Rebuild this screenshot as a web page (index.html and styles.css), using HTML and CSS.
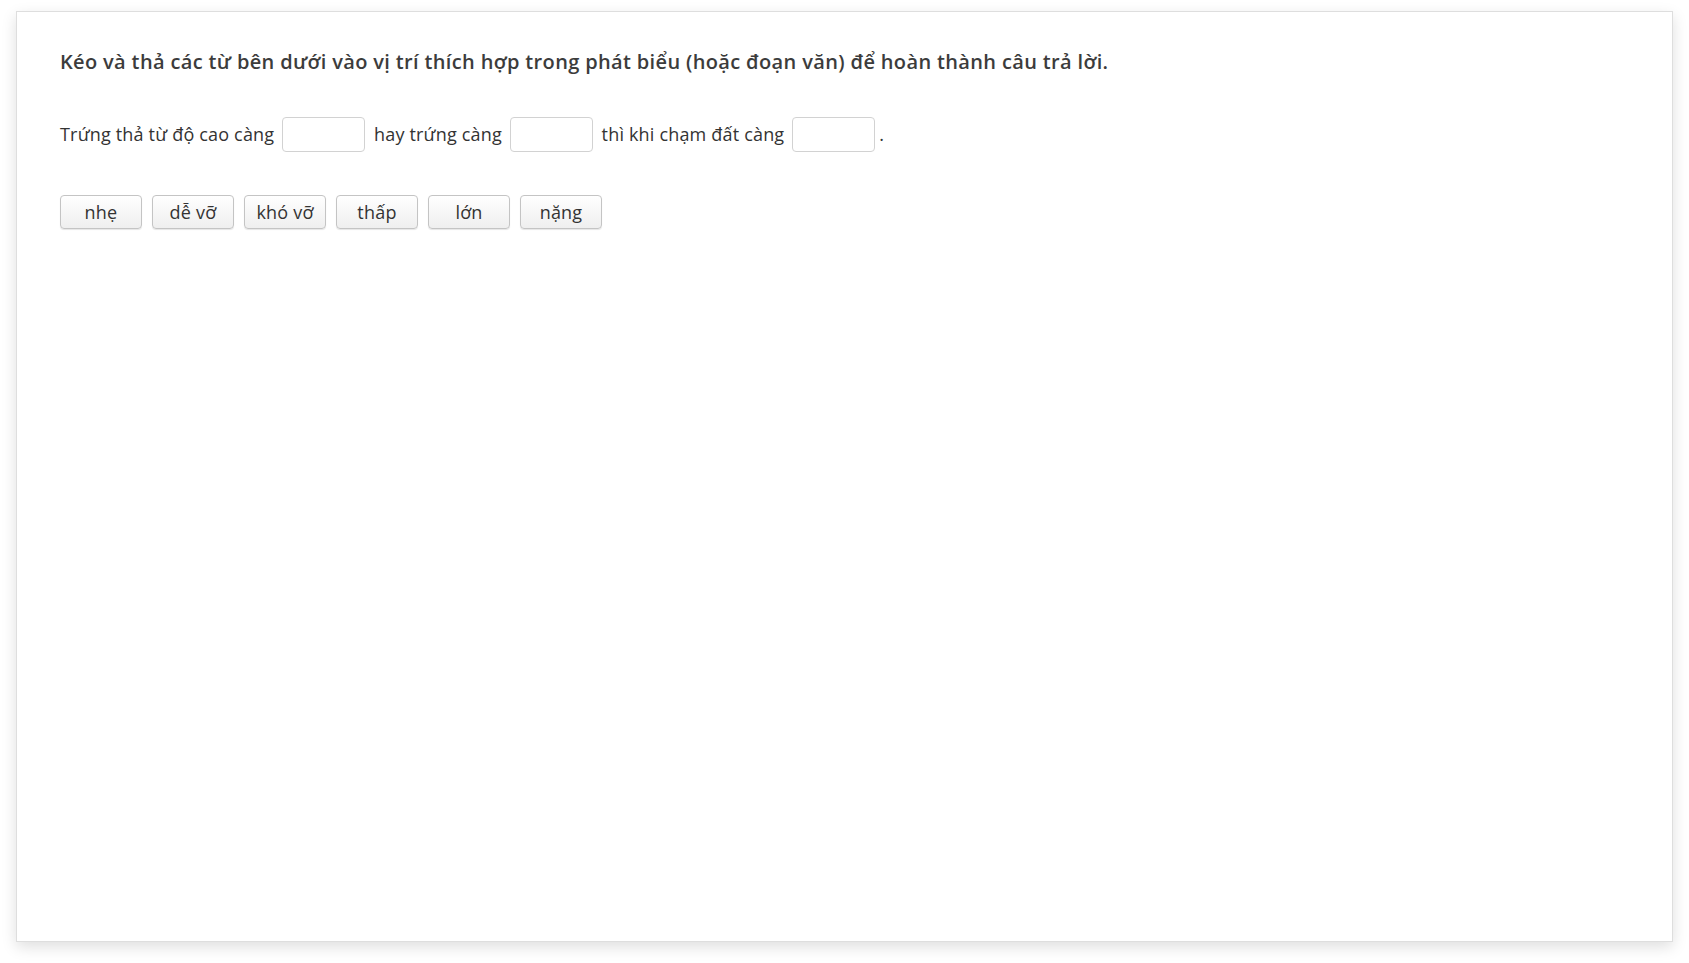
FILE: index.html
```html
<!DOCTYPE html>
<html lang="vi">
<head>
<meta charset="utf-8">
<title>Kéo và thả</title>
<link rel="stylesheet" href="styles.css">
</head>
<body>
<div class="card">
  <p class="prompt">Kéo và thả các từ bên dưới vào vị trí thích hợp trong phát biểu (hoặc đoạn văn) để hoàn thành câu trả lời.</p>
  <p class="sentence">Trứng thả từ độ cao càng <span class="blank"></span> hay trứng càng <span class="blank"></span> thì khi chạm đất càng <span class="blank"></span>.</p>
  <div class="words">
    <button class="word">nhẹ</button>
    <button class="word">dễ vỡ</button>
    <button class="word">khó vỡ</button>
    <button class="word">thấp</button>
    <button class="word">lớn</button>
    <button class="word">nặng</button>
  </div>
</div>
</body>
</html>
```

FILE: styles.css
```css
html, body {
  margin: 0;
  padding: 0;
  background: #ffffff;
}

body {
  padding: 11px 16px 21px 16px;
  font-family: "Open Sans", "Liberation Sans", sans-serif;
  color: #333333;
}

.card {
  box-sizing: border-box;
  height: 931px;
  background: #ffffff;
  border: 1px solid #dedede;
  box-shadow: 0 5px 14px rgba(0, 0, 0, 0.13);
  padding: 36px 43px;
  display: flex;
  flex-direction: column;
}

.prompt {
  margin: 0;
  font-size: 20px;
  font-weight: 600;
  letter-spacing: 0.35px;
  line-height: 28px;
  color: #3c3c3c;
}

.sentence {
  margin: 41px 0 0 0;
  font-size: 18px;
  letter-spacing: 0.18px;
  line-height: 35px;
  color: #333333;
}

.blank {
  display: inline-block;
  box-sizing: border-box;
  width: 83px;
  height: 35px;
  margin: 0 4px 0 3px;
  border: 1px solid #d2d2d2;
  border-radius: 4px;
  background: #ffffff;
  vertical-align: -11px;
}

.words {
  display: flex;
  gap: 10px;
  margin-top: 43px;
}

.word {
  box-sizing: border-box;
  width: 82px;
  height: 34px;
  padding: 0;
  border: 1px solid #c4c4c4;
  border-radius: 4px;
  background: linear-gradient(#ffffff, #efefef);
  box-shadow: 0 1px 1px rgba(0, 0, 0, 0.1);
  font-family: "Open Sans", "Liberation Sans", sans-serif;
  font-size: 18px;
  letter-spacing: 0.2px;
  color: #333333;
  line-height: 30px;
}
```
